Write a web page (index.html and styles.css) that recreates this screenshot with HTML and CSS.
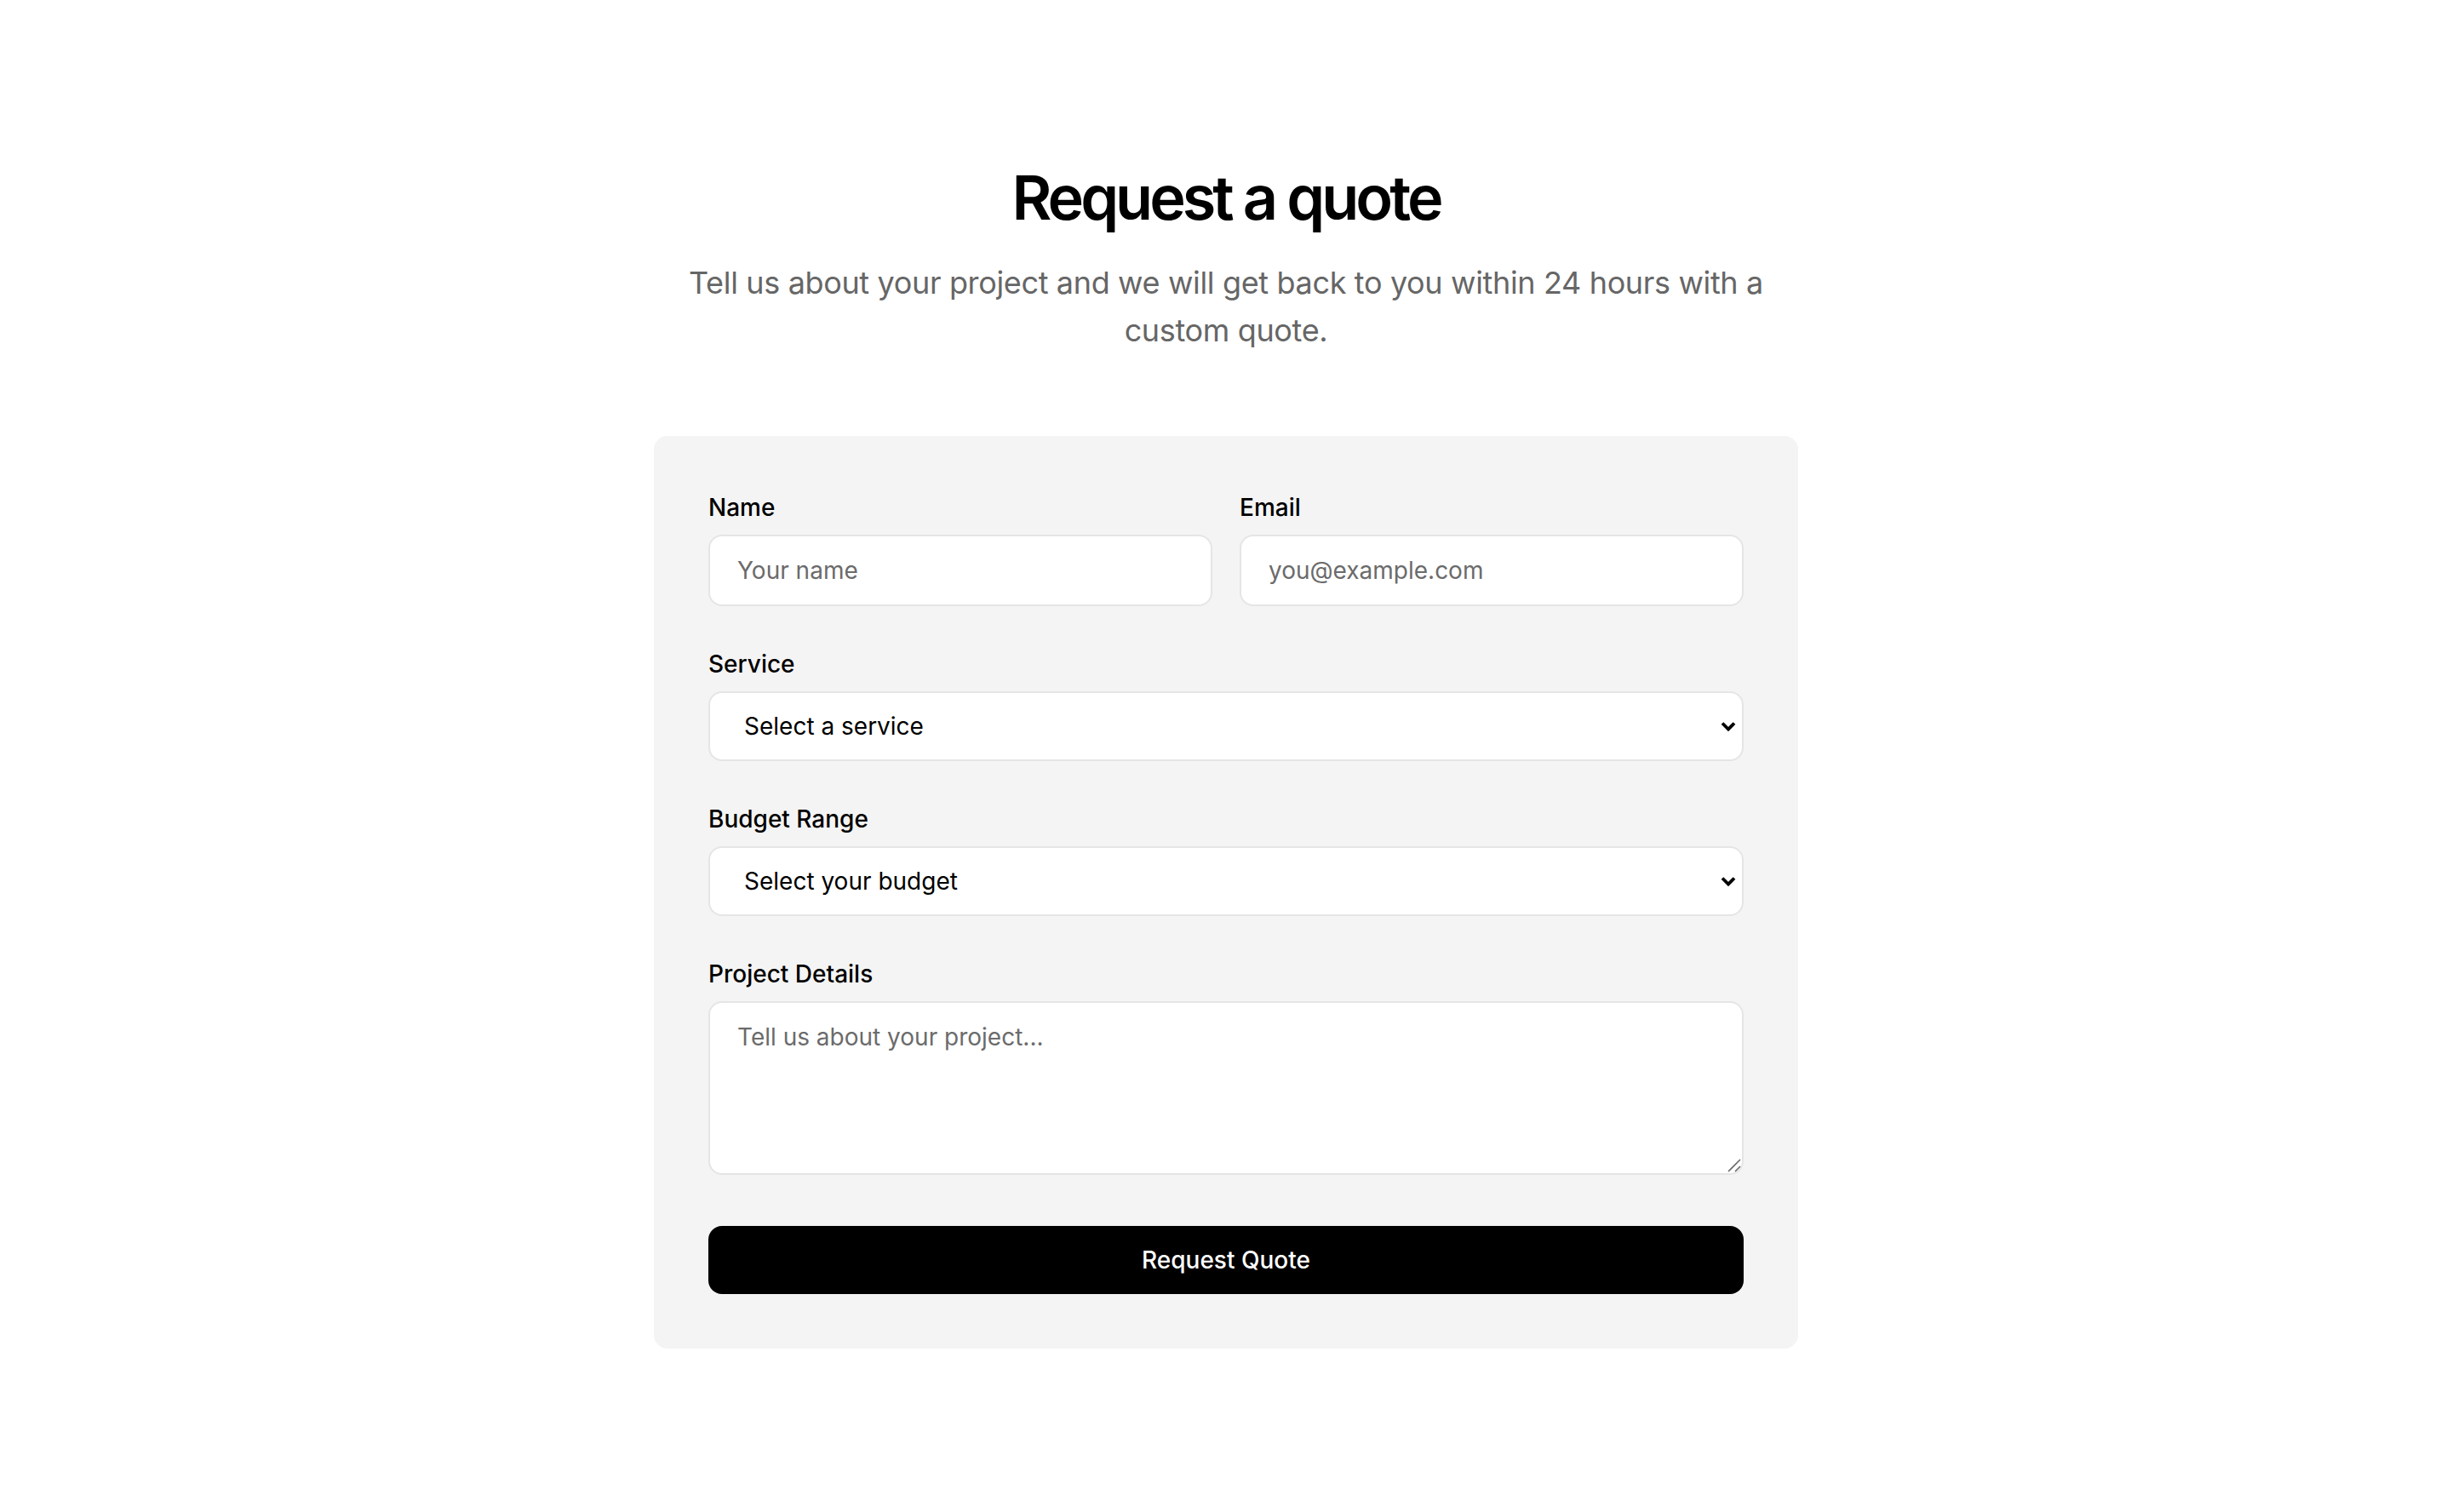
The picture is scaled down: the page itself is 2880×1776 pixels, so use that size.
FILE: index.html
```html
<!DOCTYPE html>
<html lang="en">
<head>
<meta charset="utf-8">
<title>Request a quote</title>
<link rel="stylesheet" href="styles.css">
</head>
<body>
<main class="page">
  <section class="quote">
    <header class="intro">
      <h1 class="title">Request a quote</h1>
      <p class="subtitle">Tell us about your project and we will get back to you within 24 hours with a custom quote.</p>
    </header>
    <form class="card">
      <div class="row-two">
        <div class="field">
          <label class="label" for="name">Name</label>
          <input class="control" id="name" type="text" placeholder="Your name">
        </div>
        <div class="field">
          <label class="label" for="email">Email</label>
          <input class="control" id="email" type="email" placeholder="you@example.com">
        </div>
      </div>
      <div class="field">
        <label class="label" for="service">Service</label>
        <div class="select-wrap">
          <select class="control select" id="service">
            <option>Select a service</option>
          </select>
          <svg class="chev" width="18" height="12" viewBox="0 0 18 12" aria-hidden="true"><path d="M2 2.5 L9 9.5 L16 2.5" fill="none" stroke="#000" stroke-width="3.8"/></svg>
        </div>
      </div>
      <div class="field">
        <label class="label" for="budget">Budget Range</label>
        <div class="select-wrap">
          <select class="control select" id="budget">
            <option>Select your budget</option>
          </select>
          <svg class="chev" width="18" height="12" viewBox="0 0 18 12" aria-hidden="true"><path d="M2 2.5 L9 9.5 L16 2.5" fill="none" stroke="#000" stroke-width="3.8"/></svg>
        </div>
      </div>
      <div class="field">
        <label class="label" for="details">Project Details</label>
        <div class="area-wrap">
          <textarea class="control area" id="details" placeholder="Tell us about your project..."></textarea>
          <svg class="grip" width="16" height="16" viewBox="0 0 16 16" aria-hidden="true"><path d="M1 15 L15 1 M9 15 L15 9" fill="none" stroke="#6a6a6a" stroke-width="1.6"/></svg>
        </div>
      </div>
      <button class="submit" type="button">Request Quote</button>
    </form>
  </section>
</main>
</body>
</html>
```

FILE: styles.css
```css
* {
  box-sizing: border-box;
}

html, body {
  margin: 0;
  background: #ffffff;
}

body {
  font-family: Inter, "Noto Sans", "Liberation Sans", sans-serif;
  color: #000;
}

.page {
  padding-top: 192px;
  padding-bottom: 96px;
}

.quote {
  width: 1344px;
  margin: 0 auto;
}

.intro {
  text-align: center;
  margin-bottom: 96px;
}

.title {
  margin: 0;
  font-size: 72px;
  line-height: 80px;
  font-weight: 600;
  letter-spacing: -4px;
  color: #000;
}

.subtitle {
  margin: 32px 0 0;
  font-size: 36px;
  line-height: 56px;
  letter-spacing: -0.35px;
  color: #666666;
  font-weight: 400;
}

.card {
  background: #f4f4f4;
  border-radius: 16px;
  padding: 64px;
  display: flex;
  flex-direction: column;
  gap: 48px;
}

.row-two {
  display: grid;
  grid-template-columns: 1fr 1fr;
  gap: 32px;
}

.field {
  display: flex;
  flex-direction: column;
  gap: 12px;
}

.label {
  font-size: 28px;
  line-height: 40px;
  font-weight: 500;
  color: #000;
}

.control {
  width: 100%;
  height: 84px;
  border: 2px solid #e5e5e5;
  border-radius: 16px;
  background: #ffffff;
  padding: 0 32px;
  font-family: Inter, "Noto Sans", "Liberation Sans", sans-serif;
  font-size: 28px;
  color: #000;
  outline: none;
}

.control::placeholder {
  color: #6b6b6b;
  opacity: 1;
}

.select-wrap,
.area-wrap {
  position: relative;
}

.select {
  height: 82px;
  appearance: none;
  -webkit-appearance: none;
  padding-left: 40px;
  padding-right: 64px;
}

.chev {
  position: absolute;
  right: 9px;
  top: 35px;
  pointer-events: none;
}

.area {
  height: 204px;
  padding: 20px 32px;
  line-height: 40px;
  resize: none;
  display: block;
}

.grip {
  position: absolute;
  right: 3px;
  bottom: 3px;
  pointer-events: none;
}

.submit {
  margin-top: 12px;
  height: 80px;
  width: 100%;
  border: none;
  border-radius: 16px;
  background: #000;
  color: #fff;
  font-family: Inter, "Noto Sans", "Liberation Sans", sans-serif;
  font-size: 28px;
  font-weight: 500;
  cursor: pointer;
}
```
